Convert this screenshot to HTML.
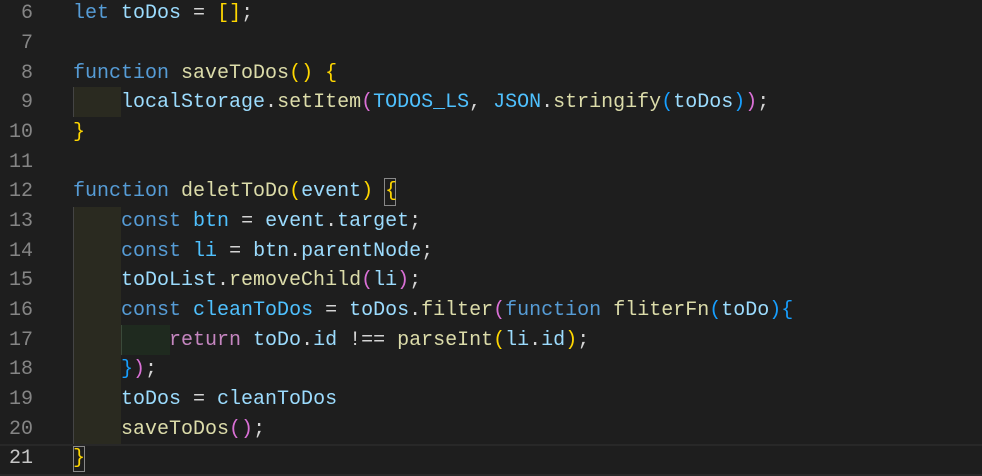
<!DOCTYPE html>
<html><head><style>
body{margin:0;background:#1e1e1e;width:982px;height:473px;overflow:hidden;position:relative;font-family:"Liberation Mono",monospace;font-size:20px}
.l{position:absolute;left:0;height:29.67px;line-height:29.67px;white-space:pre;width:982px}
.n{position:absolute;left:0;width:33px;text-align:right;color:#858585}
.c{position:absolute;left:73px;color:#d4d4d4}
.k{color:#569cd6}.v{color:#9cdcfe}.f{color:#dcdcaa}.cn{color:#4fc1ff}.p{color:#c586c0}
.b1{color:#ffd700}.b2{color:#da70d6}.b3{color:#179fff}
.ind{position:absolute;background:#2a2a20;border-left:1px solid #444}
.ind2{position:absolute;background:#1f2a1f}
</style></head><body>
<div class="ind" style="left:73px;top:87px;width:47px;height:30px"></div>
<div class="ind" style="left:73px;top:207px;width:47px;height:237px"></div>
<div class="ind2" style="left:121px;top:325px;width:48px;height:30px;border-left:1px solid #3a4a3a"></div>
<div style="position:absolute;left:0;top:444px;width:982px;height:28px;border-top:2px solid #282828;border-bottom:2px solid #282828"></div>
<div style="position:absolute;left:73px;top:446px;width:12px;height:26px;box-sizing:border-box;border:1px solid #888"></div>
<div style="position:absolute;left:384px;top:178px;width:12px;height:28px;box-sizing:border-box;border:1px solid #888"></div>

<div class="l" style="top:-0.8px"><span class="n">6</span><span class="c"><span class="k">let</span> <span class="v">toDos</span> = <span class="b1">[]</span>;</span></div>
<div class="l" style="top:28.9px"><span class="n">7</span></div>
<div class="l" style="top:58.5px"><span class="n">8</span><span class="c"><span class="k">function</span> <span class="f">saveToDos</span><span class="b1">()</span> <span class="b1">{</span></span></div>
<div class="l" style="top:88.2px"><span class="n">9</span><span class="c">    <span class="v">localStorage</span>.<span class="f">setItem</span><span class="b2">(</span><span class="cn">TODOS_LS</span>, <span class="cn">JSON</span>.<span class="f">stringify</span><span class="b3">(</span><span class="v">toDos</span><span class="b3">)</span><span class="b2">)</span>;</span></div>
<div class="l" style="top:117.9px"><span class="n">10</span><span class="c"><span class="b1">}</span></span></div>
<div class="l" style="top:147.5px"><span class="n">11</span></div>
<div class="l" style="top:177.2px"><span class="n">12</span><span class="c"><span class="k">function</span> <span class="f">deletToDo</span><span class="b1">(</span><span class="v">event</span><span class="b1">)</span> <span class="b1">{</span></span></div>
<div class="l" style="top:206.9px"><span class="n">13</span><span class="c">    <span class="k">const</span> <span class="cn">btn</span> = <span class="v">event</span>.<span class="v">target</span>;</span></div>
<div class="l" style="top:236.5px"><span class="n">14</span><span class="c">    <span class="k">const</span> <span class="cn">li</span> = <span class="v">btn</span>.<span class="v">parentNode</span>;</span></div>
<div class="l" style="top:266.2px"><span class="n">15</span><span class="c">    <span class="v">toDoList</span>.<span class="f">removeChild</span><span class="b2">(</span><span class="v">li</span><span class="b2">)</span>;</span></div>
<div class="l" style="top:295.9px"><span class="n">16</span><span class="c">    <span class="k">const</span> <span class="cn">cleanToDos</span> = <span class="v">toDos</span>.<span class="f">filter</span><span class="b2">(</span><span class="k">function</span> <span class="f">fliterFn</span><span class="b3">(</span><span class="v">toDo</span><span class="b3">){</span></span></div>
<div class="l" style="top:325.5px"><span class="n">17</span><span class="c">        <span class="p">return</span> <span class="v">toDo</span>.<span class="v">id</span> !== <span class="f">parseInt</span><span class="b1">(</span><span class="v">li</span>.<span class="v">id</span><span class="b1">)</span>;</span></div>
<div class="l" style="top:355.2px"><span class="n">18</span><span class="c">    <span class="b3">}</span><span class="b2">)</span>;</span></div>
<div class="l" style="top:384.9px"><span class="n">19</span><span class="c">    <span class="v">toDos</span> = <span class="v">cleanToDos</span></span></div>
<div class="l" style="top:414.5px"><span class="n">20</span><span class="c">    <span class="f">saveToDos</span><span class="b2">()</span>;</span></div>
<div class="l" style="top:444.2px"><span class="n" style="color:#c6c6c6">21</span><span class="c"><span class="b1">}</span></span></div>
</body></html>
